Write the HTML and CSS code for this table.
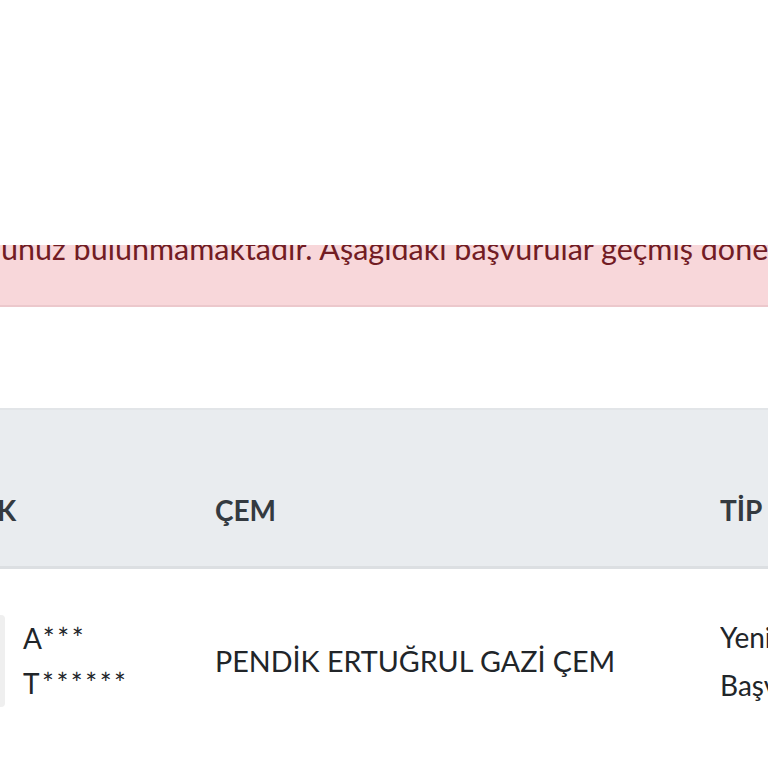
FILE: index.html
```html
<!DOCTYPE html>
<html lang="tr">
<head>
<meta charset="utf-8">
<title>Başvurularım</title>
<link rel="stylesheet" href="styles.css">
</head>
<body>
<div class="page">
  <div class="alert">
    <p class="alert-text">unuz bulunmamaktadır. Aşağıdaki başvurular geçmiş dönem</p>
  </div>
  <div class="table">
    <div class="thead">
      <div class="th th-first">K</div>
      <div class="th">ÇEM</div>
      <div class="th">TİP</div>
    </div>
    <div class="tr">
      <div class="td td-first">
        <div class="avatar"></div>
        <div class="names">
          <span>A***</span>
          <span>T******</span>
        </div>
      </div>
      <div class="td td-center">PENDİK ERTUĞRUL GAZİ ÇEM</div>
      <div class="td td-type">
        <span>Yeni</span>
        <span>Başvuru</span>
      </div>
    </div>
  </div>
</div>
</body>
</html>
```
FILE: styles.css
```css
html, body {
  margin: 0;
  padding: 0;
  background: #ffffff;
  overflow: hidden;
}
.page {
  width: 768px;
  height: 768px;
  overflow: hidden;
  font-family: "Lato", "Noto Sans", sans-serif;
  color: #212529;
  padding-top: 245px;
  box-sizing: border-box;
}
.alert {
  height: 62px;
  background: #f8d7da;
  border-bottom: 2px solid #ecc8cc;
  overflow: hidden;
  box-sizing: border-box;
}
.alert-text {
  margin: -12px 0 0 1px;
  font-size: 30.5px;
  line-height: 31px;
  color: #721c24;
  white-space: nowrap;
}
.table {
  margin-top: 101px;
}
.thead {
  display: grid;
  grid-template-columns: 215px 505px 1fr;
  height: 161px;
  background: #e9ecef;
  border-top: 2px solid #e2e5e8;
  border-bottom: 3px solid #dcdfe2;
  box-sizing: border-box;
  align-items: center;
}
.th {
  font-weight: 700;
  font-size: 28px;
  color: #343a40;
  white-space: nowrap;
  padding-top: 44px;
}
.th-first {
  margin-left: -3px;
}
.tr {
  display: grid;
  grid-template-columns: 215px 505px 1fr;
  align-items: center;
  height: 184px;
  font-size: 28px;
  white-space: nowrap;
}
.td-center {
  font-size: 28.7px;
}
.td-first {
  display: flex;
  align-items: center;
  gap: 18px;
}
.avatar {
  width: 5px;
  height: 92px;
  background: #efefef;
  border-radius: 0 4px 4px 0;
}
.names {
  display: flex;
  flex-direction: column;
  line-height: 45px;
  letter-spacing: 2.5px;
}
.td-type {
  display: flex;
  flex-direction: column;
  line-height: 48px;
  overflow: hidden;
}
```
